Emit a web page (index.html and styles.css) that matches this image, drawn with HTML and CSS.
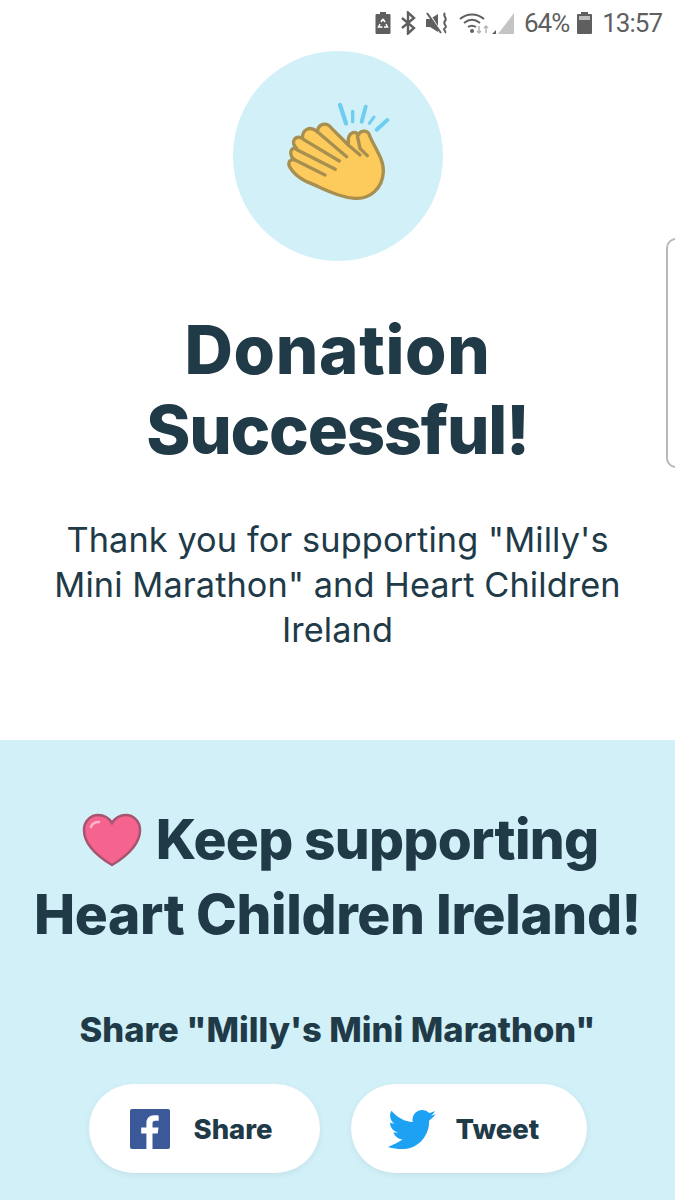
FILE: index.html
```html
<!DOCTYPE html>
<html lang="en">
<head>
<meta charset="UTF-8" />
<title>Donation Successful</title>
<link rel="stylesheet" href="styles.css">
</head>
<body>
  <div class="status-bar">
    <svg class="st-icon" width="16" height="24" viewBox="0 0 16 24"><path fill="#5f5f5f" d="M5 1h6v2h3.500a1 1 0 0 1 1 1v18a1 1 0 0 1-1 1h-13a1 1 0 0 1-1-1V4a1 1 0 0 1 1-1H5z"/><path fill="none" stroke="#fff" stroke-width="1.500" d="M8 8l-2 3M8 8l2 3M5 13l-1.500 3h4M11 13l1.500 3H9"/></svg>
    <svg class="st-icon" width="15" height="24" viewBox="0 0 15 24"><path fill="none" stroke="#5f5f5f" stroke-width="2.400" d="M1 7l12 10-6 5.500V1.500L13 7 1 17"/></svg>
    <svg class="st-icon" width="23" height="24" viewBox="0 0 23 24"><path fill="#5f5f5f" d="M0 8h4l8-5v18l-8-5H0z"/><path fill="none" stroke="#fff" stroke-width="1.500" d="M2 1l13 20"/><path fill="none" stroke="#5f5f5f" stroke-width="2" d="M1 2l14 20M19 2c-3 3 3 5 0 8s3 5 0 7 2 3 0 5"/></svg>
    <svg class="st-icon" width="30" height="24" viewBox="0 0 30 24"><path fill="none" stroke="#5f5f5f" stroke-width="2" d="M1 8c7-6 17-6 24 0M5 12c5-4 11-4 16 0M9 16c3-2 5-2 8 0"/><circle cx="13" cy="20" r="2" fill="#5f5f5f"/><path fill="none" stroke="#b5b5b5" stroke-width="1.500" d="M20 15v7M18 20l2 2 2-2M27 22v-7M25 17l2-2 2 2"/></svg>
    <svg class="st-icon st-signal" width="22" height="24" viewBox="0 0 22 24"><path fill="#c4c4c4" d="M22 2v21H6z"/><path fill="#5f5f5f" d="M0 23l4-4v4z"/></svg>
    <span class="st-pct">64%</span>
    <svg class="st-icon st-batt" width="15" height="24" viewBox="0 0 15 24"><path fill="#5f5f5f" d="M4 1h7v2h3a1 1 0 0 1 1 1v18a1 1 0 0 1-1 1H1a1 1 0 0 1-1-1V4a1 1 0 0 1 1-1h3z"/><path fill="#bdbdbd" d="M2 5h11v4H2z"/></svg>
    <span class="st-time">13:57</span>
  </div>

  <div class="edge-handle"></div>

  <section class="top">
    <div class="clap-circle">
      <svg width="150" height="120" viewBox="0 0 450 360">
        <g fill="none" stroke="#6fcdf2" stroke-linecap="round">
          <path stroke-width="13" d="M240 45l18 55"/>
          <path stroke-width="10" d="M278 64v31"/>
          <path stroke-width="12" d="M317 50l-12 45"/>
          <path stroke-width="9" d="M342 81l-14 19"/>
          <path stroke-width="12" d="M382 90l-32 29"/>
        </g>
        <path fill="#fdcb5b" stroke="#a78f4f" stroke-width="10" stroke-linejoin="round" d="M265 145C270 125 288 122 295 135 300 122 320 118 327 132 338 165 372 205 370 245 368 295 330 328 285 325 235 322 190 295 140 275 120 265 100 250 90 232 80 215 95 205 105 210 85 195 90 170 110 175 90 155 105 135 128 145 125 120 150 105 172 125 175 100 200 95 215 115L265 165Z"/>
        <g fill="none" stroke="#a78f4f" stroke-width="10" stroke-linecap="round">
          <path d="M172 125l88 75M130 148l108 65M108 178l118 60M105 210l90 45M292 137l8 38 22 22M265 165l35 30"/>
        </g>
      </svg>
    </div>
    <h1 class="title"><span class="title-wide">Donation</span><br><span class="title-tight">Successful!</span></h1>
    <p class="thanks">Thank you for supporting "Milly's Mini Marathon" and Heart Children Ireland</p>
  </section>

  <section class="support">
    <h2 class="support-title">
      <span class="support-first">
        <svg class="heart" width="60" height="54" viewBox="0 0 60 54">
          <path fill="#f4648f" stroke="#a65470" stroke-width="2.500" d="M30 52C20 46 2 33 2 17 2 8 9 2 16 2c6 0 11 3 14 8 3-5 8-8 14-8 7 0 14 6 14 15 0 16-18 29-28 35z"/>
          <path fill="none" stroke="#fbb6cb" stroke-width="2.500" stroke-linecap="round" d="M9 14c1-3 4-5 8-5"/>
        </svg>
        Keep supporting</span><br>Heart Children Ireland!
    </h2>
    <h3 class="share-title">Share "Milly's Mini Marathon"</h3>
    <div class="share-row">
      <a class="share-btn fb-btn">
        <svg width="40" height="40" viewBox="0 0 40 40"><rect width="40" height="40" rx="2" fill="#3b5998"/><path fill="#fff" d="M27.500 40V24.500h5.200l.8-6h-6v-3.800c0-1.700.5-2.900 3-2.900h3.200V6.400c-.6-.1-2.400-.2-4.600-.2-4.600 0-7.700 2.800-7.700 7.900v4.400h-5.200v6h5.200V40z" transform="translate(-5 0)"/></svg>
        Share
      </a>
      <a class="share-btn tw-btn">
        <svg width="48" height="40" viewBox="0 0 48 40"><path fill="#1da1f2" d="M48 4.700c-1.400.9-3.300 1.600-5 1.900 1.700-1 3.100-2.800 3.700-4.700-1.600 1-3.500 1.700-5.400 2.100A9.800 9.800 0 0 0 34.300 1c-5.400 0-9.800 4.400-9.800 9.800 0 .8.100 1.500.3 2.200C16.700 12.600 9.400 8.700 3.500 1.700 2.600 3.200 2.100 4.800 2.100 6.600c0 3.400 1.700 6.400 4.400 8.200-1.600 0-3.100-.5-4.400-1.200v.1c0 4.800 3.400 8.700 7.900 9.600-.8.200-1.700.3-2.600.3-.6 0-1.300-.1-1.900-.2 1.300 3.900 4.900 6.800 9.200 6.800C10.500 33.300 5 35.700 0 38c5 1.500 9 2 14 2 17.500 0 27.100-14.500 27.100-27.100v-1.200c1.900-1.400 5.500-4.900 6.900-7z"/></svg>
        Tweet
      </a>
    </div>
  </section>
</body>
</html>
```

FILE: styles.css
```css
* {
  box-sizing: border-box;
}
html, body {
  margin: 0;
  padding: 0;
  height: 1200px;
  overflow: hidden;
  background: #fff;
  font-family: Inter, Lato, sans-serif;
  color: #203a47;
}
body {
  position: relative;
  display: flex;
  flex-direction: column;
}
.status-bar {
  height: 46px;
  display: flex;
  justify-content: flex-end;
  align-items: center;
  gap: 10px;
  padding-right: 13px;
  color: #5f5f5f;
  font-family: Roboto, sans-serif;
  font-size: 26px;
  letter-spacing: -1px;
}
.st-signal {
  margin-left: -7px;
}
.st-batt {
  margin-left: -2px;
}
.edge-handle {
  position: absolute;
  left: 666px;
  top: 238px;
  width: 20px;
  height: 230px;
  border: 2px solid #b9b9b9;
  border-radius: 12px;
}
.top {
  height: 694px;
  display: flex;
  flex-direction: column;
  align-items: center;
  padding-top: 5px;
}
.clap-circle {
  width: 210px;
  height: 210px;
  border-radius: 50%;
  background: #d2f0f8;
  display: flex;
  justify-content: center;
  align-items: center;
  padding: 0 5px 12px 0;
}
.title {
  margin: 49px 0 0;
  font-size: 67px;
  line-height: 80px;
  font-weight: 800;
  text-align: center;
}
.title-wide {
  letter-spacing: 0.7px;
}
.title-tight {
  letter-spacing: -1.3px;
}
.thanks {
  margin: 47px 0 0;
  padding: 0 40px;
  font-size: 34.300px;
  line-height: 45px;
  letter-spacing: 0.1px;
  text-align: center;
}
.support {
  flex-grow: 1;
  background: #d2f0f8;
  display: flex;
  flex-direction: column;
  align-items: center;
  padding-top: 62px;
}
.support-title {
  margin: 0;
  font-size: 55px;
  line-height: 75px;
  font-weight: 800;
  letter-spacing: -0.4px;
  text-align: center;
  white-space: nowrap;
}
.support-first {
  letter-spacing: -0.7px;
}
.heart {
  vertical-align: -8px;
  margin: 0 2px 0 6px;
}
.share-title {
  margin: 57px 0 0;
  font-size: 34.500px;
  line-height: 42px;
  font-weight: 800;
  text-align: center;
}
.share-row {
  display: flex;
  gap: 31px;
  margin-top: 33px;
}
.share-btn {
  height: 89px;
  border-radius: 45px;
  background: #fff;
  box-shadow: 0 2px 6px rgba(32, 58, 71, 0.08);
  display: flex;
  align-items: center;
  font-size: 27.500px;
  font-weight: 800;
}
.fb-btn {
  width: 231px;
  padding-left: 41px;
  gap: 24px;
}
.tw-btn {
  width: 236px;
  padding-left: 37px;
  gap: 20px;
}
```
